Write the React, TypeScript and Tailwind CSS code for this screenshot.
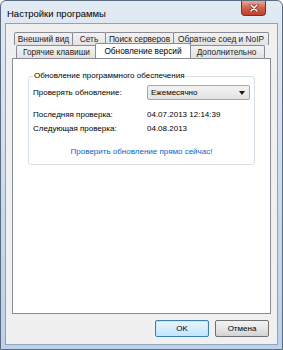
import React from 'react'

const font = { fontFamily: '"Liberation Sans", Arial, sans-serif' }

const Tab = ({ label, w, active = false }: { label: string; w: string; active?: boolean }) => (
  <div
    className={
      active
        ? `${w} h-[15px] -mt-[2px] -mx-[2px] z-10 relative bg-white border border-[#898c95] border-b-0 rounded-t-[2px] flex items-center justify-center text-black`
        : `${w} h-[13px] bg-gradient-to-b from-[#f3f3f3] to-[#e2e2e2] border border-[#898c95] border-b-0 -ml-px first:ml-0 rounded-t-[2px] flex items-center justify-center text-[#222]`
    }
  >
    {label}
  </div>
)

export default function App() {
  return (
    <div className="w-[283px] h-[350px] text-[8px] text-black" style={font}>
      <div className="w-full h-full flex flex-col rounded-t-[6px] border border-[#5a6b80] bg-gradient-to-b from-[#e2eaf3] via-[#cddcee] to-[#bcd1ea]">
        <div className="h-[22px] flex items-start justify-between">
          <div className="pl-[6px] pt-[6px] text-[9.5px]">Настройки программы</div>
          <button className="w-[25px] h-[15px] mr-[16px] rounded-b-[4px] border border-t-0 border-[#7a3027] bg-gradient-to-b from-[#eaa899] via-[#d0604c] to-[#c13f2b] flex items-center justify-center">
            <svg width="10" height="8" viewBox="0 0 10 8">
              <path d="M2 1 L8 7 M8 1 L2 7" stroke="#6b2a22" strokeWidth="3" strokeLinecap="round" />
              <path d="M2 1 L8 7 M8 1 L2 7" stroke="#ffffff" strokeWidth="1.6" strokeLinecap="round" />
            </svg>
          </button>
        </div>

        <div className="flex-1 mx-[4px] mb-[4px] border border-[#8ea2ba] bg-[#f0f0f0] flex flex-col pt-[8px] pb-[7px]">
          <div className="flex flex-col pl-[8px] text-[8.3px]">
            <div className="flex h-[13px]">
              <Tab label="Внешний вид" w="w-[59px]" />
              <Tab label="Сеть" w="w-[34px]" />
              <Tab label="Поиск серверов" w="w-[69px]" />
              <Tab label="Обратное соед и NoIP" w="w-[96px]" />
            </div>
            <div className="flex h-[13px] pl-[2px] items-end">
              <Tab label="Горячие клавиши" w="w-[81px]" />
              <Tab label="Обновление версий" w="w-[96px]" active />
              <Tab label="Дополнительно" w="w-[77px]" />
            </div>
          </div>

          <div className="ml-[6px] mr-[6px] h-[256px] bg-white border border-[#898c95] px-[15px] pt-[11px]">
            <fieldset className="border border-[#d5dfe5] rounded-[3px] px-[4px] pb-[6px]">
              <legend className="px-[1px] ml-0 leading-[12px]">Обновление программного обеспечения</legend>
              <div className="flex items-center mt-[3px]">
                <div className="w-[114px]">Проверять обновление:</div>
                <div className="w-[103px] h-[15px] border border-[#a7a7a7] rounded-[2px] bg-gradient-to-b from-[#f4f4f4] to-[#e2e2e2] flex items-center justify-between pl-[3px] pr-[4px]">
                  <span>Ежемесячно</span>
                  <svg width="6" height="4" viewBox="0 0 6 4">
                    <path d="M0 0 H6 L3 4 Z" fill="#1a1a1a" />
                  </svg>
                </div>
              </div>
              <div className="flex items-center mt-[9px] h-[12px]">
                <div className="w-[114px]">Последняя проверка:</div>
                <div>04.07.2013 12:14:39</div>
              </div>
              <div className="flex items-center mt-[2px] h-[12px]">
                <div className="w-[114px]">Следующая проверка:</div>
                <div>04.08.2013</div>
              </div>
              <div className="mt-[11px] text-center text-[#0066cc] h-[12px]">
                Проверить обновление прямо сейчас!
              </div>
            </fieldset>
          </div>

          <div className="flex-1" />

          <div className="flex justify-end gap-[6px] pr-[8px]">
            <button className="w-[54px] h-[17px] rounded-[2px] border border-[#3c7fb1] bg-gradient-to-b from-[#eaf6fd] to-[#bee6fd] shadow-[inset_0_0_0_1px_#c7e6fa]">
              OK
            </button>
            <button className="w-[54px] h-[17px] rounded-[2px] border border-[#707070] bg-gradient-to-b from-[#f2f2f2] via-[#e6e6e6] to-[#d2d2d2]">
              Отмена
            </button>
          </div>
        </div>
      </div>
    </div>
  )
}
